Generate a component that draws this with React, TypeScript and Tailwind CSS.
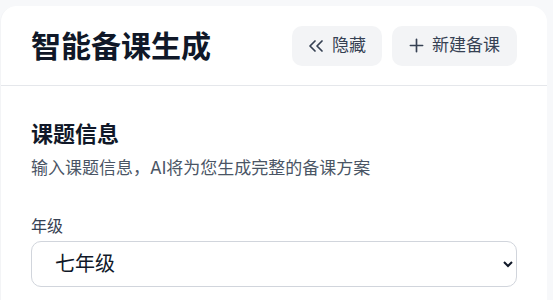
import { ChevronsLeft, Plus } from "lucide-react";

const font = {
  fontFamily: '"Inter", "Noto Sans CJK SC", sans-serif',
};

export default function App() {
  return (
    <div className="min-h-screen bg-[#f7f8fa] pt-[6px] pr-[6px]" style={font}>
      <div className="bg-white rounded-t-2xl border-l border-gray-100 min-h-[294px]">
        <div className="h-[80px] flex items-center justify-between pl-[30px] pr-[30px] border-b border-gray-200">
          <h1 className="text-[30px] font-bold leading-none text-gray-900">智能备课生成</h1>
          <div className="flex items-center gap-[10px]">
            <button className="h-10 w-[90px] rounded-[10px] bg-gray-100 pl-3 flex items-center gap-1 text-[17px] text-gray-700">
              <ChevronsLeft className="w-6 h-6" strokeWidth={1.75} />
              <span>隐藏</span>
            </button>
            <button className="h-10 w-[125px] rounded-[10px] bg-gray-100 pl-[14px] flex items-center gap-[5px] text-[17px] text-gray-700">
              <Plus className="w-[21px] h-[21px]" strokeWidth={1.9} />
              <span>新建备课</span>
            </button>
          </div>
        </div>

        <div className="pl-[30px] pr-[30px] pt-[33px]">
          <h2 className="text-[22px] leading-[30px] font-bold text-gray-900">课题信息</h2>
          <p className="mt-[6px] text-[17px] leading-[26px] text-gray-600">
            输入课题信息，AI将为您生成完整的备课方案
          </p>

          <div className="mt-[33px]">
            <label className="block text-[16px] leading-[24px] text-gray-700">年级</label>
            <select
              className="mt-[3px] w-full h-[46px] rounded-[10px] border border-gray-300 bg-white pl-[19px] pr-3 text-[20px] text-gray-900"
              defaultValue="七年级"
              style={font}
            >
              <option>七年级</option>
              <option>八年级</option>
              <option>九年级</option>
            </select>
          </div>
        </div>
      </div>
    </div>
  );
}
